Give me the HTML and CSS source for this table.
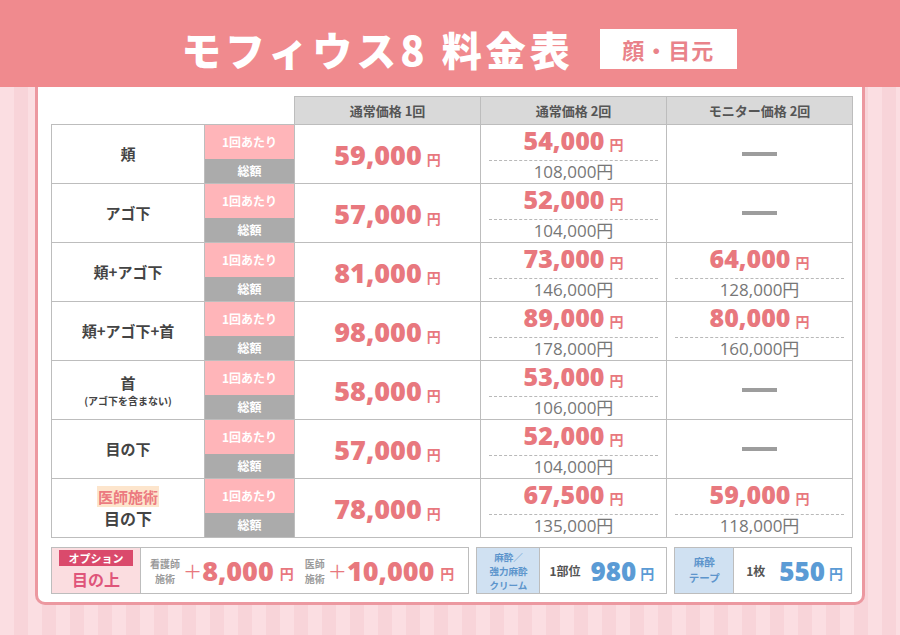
FILE: index.html
```html
<!DOCTYPE html>
<html lang="ja">
<head>
<meta charset="utf-8">
<title>モフィウス8 料金表</title>
<link rel="stylesheet" href="styles.css">
</head>
<body>
<header class="top">
  <h1 class="title">モフィウス8 料金表</h1>
  <div class="tag">顔・目元</div>
</header>
<main class="card">
  <table class="price">
    <colgroup>
      <col class="c-label"><col class="c-badge"><col class="c-p"><col class="c-p"><col class="c-p">
    </colgroup>
    <thead>
      <tr><th class="blank" colspan="2"></th><th>通常価格 1回</th><th>通常価格 2回</th><th>モニター価格 2回</th></tr>
    </thead>
    <tbody>
      <tr>
        <td class="label">頬</td>
        <td class="badge"><div class="per">1回あたり</div><div class="tot">総額</div></td>
        <td class="p1"><span class="num">59,000</span><span class="yen">円</span></td>
        <td class="p2"><div class="big"><span class="num">54,000</span><span class="yen">円</span></div><div class="sum">108,000円</div></td>
        <td class="none"><div class="dash"></div></td>
      </tr>
      <tr>
        <td class="label">アゴ下</td>
        <td class="badge"><div class="per">1回あたり</div><div class="tot">総額</div></td>
        <td class="p1"><span class="num">57,000</span><span class="yen">円</span></td>
        <td class="p2"><div class="big"><span class="num">52,000</span><span class="yen">円</span></div><div class="sum">104,000円</div></td>
        <td class="none"><div class="dash"></div></td>
      </tr>
      <tr>
        <td class="label">頬+アゴ下</td>
        <td class="badge"><div class="per">1回あたり</div><div class="tot">総額</div></td>
        <td class="p1"><span class="num">81,000</span><span class="yen">円</span></td>
        <td class="p2"><div class="big"><span class="num">73,000</span><span class="yen">円</span></div><div class="sum">146,000円</div></td>
        <td class="p2"><div class="big"><span class="num">64,000</span><span class="yen">円</span></div><div class="sum">128,000円</div></td>
      </tr>
      <tr>
        <td class="label">頬+アゴ下+首</td>
        <td class="badge"><div class="per">1回あたり</div><div class="tot">総額</div></td>
        <td class="p1"><span class="num">98,000</span><span class="yen">円</span></td>
        <td class="p2"><div class="big"><span class="num">89,000</span><span class="yen">円</span></div><div class="sum">178,000円</div></td>
        <td class="p2"><div class="big"><span class="num">80,000</span><span class="yen">円</span></div><div class="sum">160,000円</div></td>
      </tr>
      <tr>
        <td class="label">首<div class="note">(アゴ下を含まない)</div></td>
        <td class="badge"><div class="per">1回あたり</div><div class="tot">総額</div></td>
        <td class="p1"><span class="num">58,000</span><span class="yen">円</span></td>
        <td class="p2"><div class="big"><span class="num">53,000</span><span class="yen">円</span></div><div class="sum">106,000円</div></td>
        <td class="none"><div class="dash"></div></td>
      </tr>
      <tr>
        <td class="label">目の下</td>
        <td class="badge"><div class="per">1回あたり</div><div class="tot">総額</div></td>
        <td class="p1"><span class="num">57,000</span><span class="yen">円</span></td>
        <td class="p2"><div class="big"><span class="num">52,000</span><span class="yen">円</span></div><div class="sum">104,000円</div></td>
        <td class="none"><div class="dash"></div></td>
      </tr>
      <tr>
        <td class="label"><span class="doc">医師施術</span><div class="sub">目の下</div></td>
        <td class="badge"><div class="per">1回あたり</div><div class="tot">総額</div></td>
        <td class="p1"><span class="num">78,000</span><span class="yen">円</span></td>
        <td class="p2"><div class="big"><span class="num">67,500</span><span class="yen">円</span></div><div class="sum">135,000円</div></td>
        <td class="p2"><div class="big"><span class="num">59,000</span><span class="yen">円</span></div><div class="sum">118,000円</div></td>
      </tr>
    </tbody>
  </table>

  <div class="options">
    <div class="obox obox-eye">
      <div class="ohead pinkhead">
        <span class="optbadge">オプション</span>
        <span class="optname">目の上</span>
      </div>
      <div class="obody">
        <span class="who">看護師<br>施術</span>
        <span class="plus">+</span><span class="onum">8,000</span><span class="oyen">円</span>
        <span class="who who2">医師<br>施術</span>
        <span class="plus">+</span><span class="onum">10,000</span><span class="oyen">円</span>
      </div>
    </div>
    <div class="obox obox-cream">
      <div class="ohead bluehead">麻酔／<br>強力麻酔<br>クリーム</div>
      <div class="obody">
        <span class="unit">1部位</span><span class="bnum">980</span><span class="byen">円</span>
      </div>
    </div>
    <div class="obox obox-tape">
      <div class="ohead bluehead">麻酔<br>テープ</div>
      <div class="obody">
        <span class="unit">1枚</span><span class="bnum">550</span><span class="byen">円</span>
      </div>
    </div>
  </div>
</main>
</body>
</html>
```
FILE: styles.css
```css
html, body {
  margin: 0;
  padding: 0;
}
body {
  width: 900px;
  height: 635px;
  overflow: hidden;
  font-family: "Noto Sans CJK JP", "Noto Sans", sans-serif;
  background: repeating-linear-gradient(90deg, #fbdee2 0 14px, #f8d4d9 14px 28px);
  color: #444;
}

/* header */
.top {
  height: 87px;
  background: #f08a8e;
  display: flex;
  align-items: center;
  justify-content: center;
  padding: 10px 0 0 18px;
  box-sizing: border-box;
  gap: 26px;
}
.title {
  margin: 0;
  color: #fff;
  font-size: 40px;
  font-weight: 900;
  letter-spacing: 4px;
  line-height: 1;
}
.tag {
  width: 137px;
  height: 40px;
  background: #fff;
  color: #e9838a;
  font-size: 22px;
  font-weight: 700;
  letter-spacing: 1px;
  display: flex;
  align-items: center;
  justify-content: center;
}

/* card */
.card {
  margin: 0 0 0 35px;
  background: #fff;
  border: 3px solid #ec98a0;
  border-top: none;
  border-radius: 0 0 10px 10px;
  padding: 9px 10px 8px 13px;
  box-sizing: content-box;
  width: 801px;
}

/* table */
.price {
  width: 801px;
  border-collapse: collapse;
  table-layout: fixed;
}
.c-label { width: 153px; }
.c-badge { width: 90px; }
.c-p { width: 186px; }

.price th {
  height: 27px;
  background: #d9d9d9;
  border: 1px solid #bdbdbd;
  color: #555;
  font-size: 13px;
  font-weight: 700;
  padding: 0;
}
.price th.blank {
  background: #fff;
  border: none;
}
.price td {
  height: 58px;
  border: 1px solid #bdbdbd;
  padding: 0;
  text-align: center;
  vertical-align: middle;
}
.price td.label {
  font-size: 15px;
  font-weight: 700;
  color: #444;
  line-height: 1.3;
}
.note {
  font-size: 10px;
  line-height: 1.2;
  margin-top: 2px;
}
.doc {
  color: #ec7a80;
  background: #fde5cc;
  padding: 0 1px;
  font-size: 15px;
}
.sub {
  font-size: 16px;
  margin-top: 2px;
}
.price td.badge {
  border-left: none;
  border-right: none;
  color: #fff;
  font-size: 12px;
  font-weight: 700;
}
.per {
  height: 34px;
  line-height: 34px;
  background: #ffb5b9;
}
.tot {
  height: 24px;
  line-height: 24px;
  background: #ababab;
}

.num {
  font-family: "Open Sans", "Noto Sans", sans-serif;
  font-weight: 800;
  color: #e8787e;
}
.yen {
  font-weight: 700;
  color: #e8787e;
  font-size: 14px;
  margin-left: 5px;
}
.p1 .num {
  font-size: 27px;
}
.p2 .big {
  line-height: 28px;
  margin-top: 1px;
}
.p2 .num {
  font-size: 25px;
}
.p2 .sum {
  margin: 2px 8px 0;
  border-top: 1px dashed #b9b9b9;
  font-family: "Open Sans", "Noto Sans CJK JP", sans-serif;
  font-size: 17px;
  line-height: 22px;
  color: #777;
}
.dash {
  width: 35px;
  height: 4px;
  background: #9d9d9d;
  margin: 0 auto;
}

/* options */
.options {
  display: flex;
  gap: 7px;
  margin-top: 9px;
}
.obox {
  display: flex;
  height: 45px;
  border: 1px solid #bdbdbd;
}
.obox-eye { width: 417px; }
.obox-cream { width: 189px; }
.obox-tape { width: 176px; }
.ohead {
  display: flex;
  flex-direction: column;
  align-items: center;
  justify-content: center;
  border-right: 1px solid #bdbdbd;
  font-weight: 700;
}
.pinkhead {
  width: 88px;
  background: #fbdde0;
  gap: 1px;
}
.optbadge {
  background: #da4a6c;
  color: #fff;
  font-size: 11px;
  line-height: 16px;
  width: 74px;
  text-align: center;
}
.optname {
  color: #df557a;
  font-size: 16px;
  line-height: 24px;
}
.bluehead {
  display: block;
  padding-top: 2px;
  box-sizing: border-box;
  background: #d0e1f2;
  color: #5d95cc;
  font-size: 9.5px;
  line-height: 14px;
  text-align: center;
}
.obox-cream .bluehead { width: 63px; }
.obox-tape .bluehead { width: 59px; font-size: 10.5px; line-height: 16px; padding-top: 6px; }

.obody {
  display: flex;
  align-items: center;
  padding-left: 9px;
}
.who {
  font-size: 10px;
  line-height: 15px;
  font-weight: 700;
  color: #9a9a9a;
  text-align: center;
  margin-right: 4px;
}
.who2 { margin-left: 11px; }
.plus {
  font-family: "Open Sans", sans-serif;
  font-weight: 300;
  font-size: 30px;
  color: #e8787e;
  margin-right: 1px;
}
.onum {
  font-family: "Open Sans", sans-serif;
  font-weight: 800;
  font-size: 27px;
  color: #e8787e;
}
.oyen {
  font-size: 14px;
  font-weight: 700;
  color: #e8787e;
  margin-left: 6px;
  margin-top: 5px;
}
.unit {
  font-size: 12px;
  font-weight: 700;
  color: #555;
  margin-right: 10px;
}
.obox-tape .unit { margin-left: 3px; margin-right: 14px; }
.bnum {
  font-family: "Open Sans", sans-serif;
  font-weight: 800;
  font-size: 26px;
  color: #5b9bd5;
}
.byen {
  font-size: 14px;
  font-weight: 700;
  color: #5b9bd5;
  margin-left: 4px;
  margin-top: 5px;
}
```
